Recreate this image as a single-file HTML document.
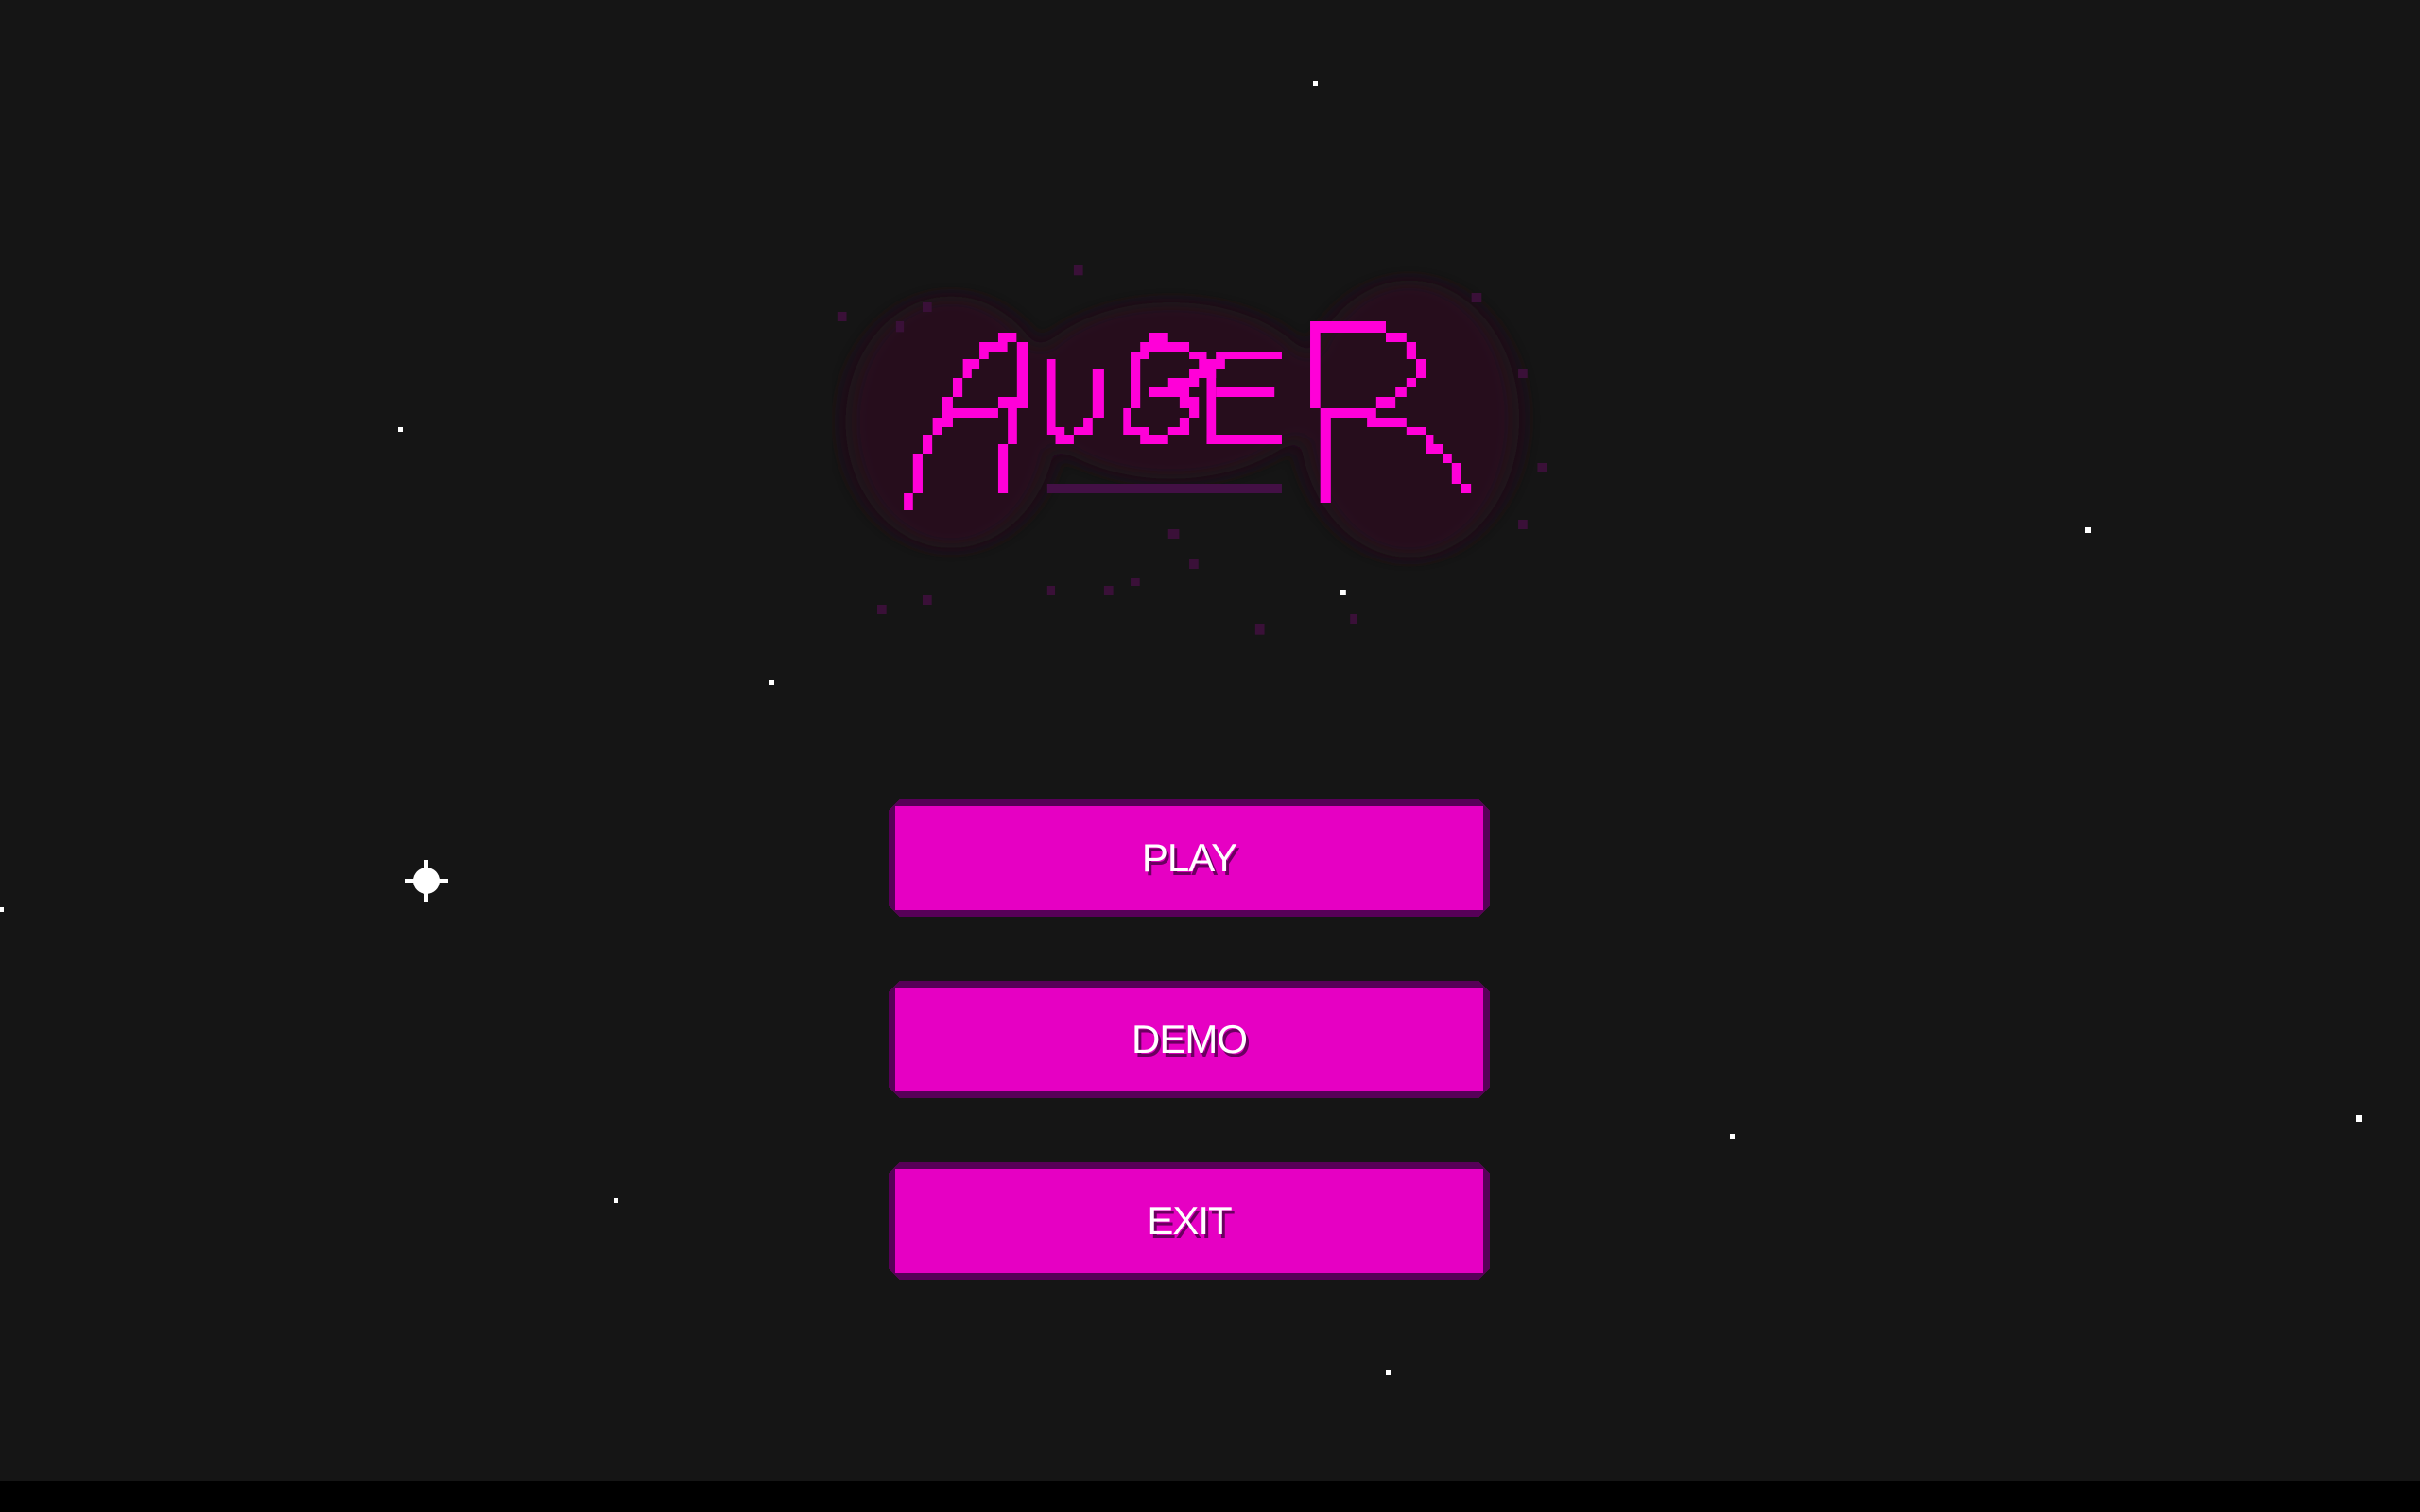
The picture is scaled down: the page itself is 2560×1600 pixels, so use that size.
<!DOCTYPE html>
<html><head><style>
html,body{margin:0;padding:0;background:#151515;width:2560px;height:1600px;overflow:hidden;position:relative;font-family:"Liberation Sans",sans-serif}
.s{position:absolute;background:#fff;width:5px;height:5px}
.btn{position:absolute;left:940px;width:636px;height:124px;background:#e600c3;border:0;box-sizing:border-box;
clip-path:polygon(12px 0,calc(100% - 12px) 0,100% 12px,100% calc(100% - 12px),calc(100% - 12px) 100%,12px 100%,0 calc(100% - 12px),0 12px);}
.btn::before{content:"";position:absolute;inset:0;box-shadow:inset 0 0 0 7px #570058;}
.btn span{position:absolute;left:0;right:0;top:50%;transform:translateY(-50%);text-align:center;color:#fff;font-size:42px;letter-spacing:-1px;text-shadow:3px 4px 0 #6a005f}
.bar{position:absolute;left:0;top:1567px;width:2560px;height:33px;background:#000}
</style></head><body>
<svg style="position:absolute;left:880px;top:280px" width="760" height="400" viewBox="0 0 1568 1200" preserveAspectRatio="none">
<defs><filter id="b"><feGaussianBlur stdDeviation="25"/></filter></defs>
<g fill="#26101f" filter="url(#b)">
<ellipse cx="260" cy="500" rx="230" ry="400"/>
<ellipse cx="740" cy="400" rx="320" ry="280"/>
<ellipse cx="1260" cy="490" rx="240" ry="440"/>
</g>
<g fill="#3a1038">
<rect x="528" y="0" width="20" height="34"/><rect x="198" y="120" width="20" height="30"/><rect x="12" y="150" width="20" height="30"/><rect x="140" y="180" width="17" height="34"/><rect x="1396" y="90" width="22" height="30"/><rect x="1498" y="330" width="20" height="30"/><rect x="1540" y="630" width="20" height="30"/><rect x="1498" y="810" width="20" height="30"/><rect x="734" y="840" width="24" height="30"/><rect x="780" y="936" width="20" height="30"/><rect x="652" y="996" width="20" height="24"/><rect x="470" y="1020" width="17" height="30"/><rect x="594" y="1020" width="20" height="30"/><rect x="198" y="1050" width="20" height="30"/><rect x="99" y="1080" width="20" height="30"/><rect x="1131" y="1110" width="16" height="30"/><rect x="924" y="1140" width="20" height="35"/>
</g>
<rect x="1110" y="1032" width="12" height="18" fill="#fff"/>
<rect x="470" y="696" width="512" height="30" fill="#431045"/>
<g fill="#ff00d8">
<rect x="363" y="216" width="40" height="30"/><rect x="322" y="246" width="61" height="30"/><rect x="322" y="276" width="20" height="24"/><rect x="286" y="300" width="36" height="30"/><rect x="286" y="330" width="19" height="30"/><rect x="264" y="360" width="21" height="60"/><rect x="240" y="420" width="24" height="36"/><rect x="240" y="456" width="123" height="30"/><rect x="220" y="486" width="44" height="30"/><rect x="220" y="516" width="20" height="24"/><rect x="198" y="540" width="21" height="60"/><rect x="177" y="600" width="21" height="126"/><rect x="157" y="726" width="20" height="54"/>
<rect x="404" y="246" width="25" height="174"/><rect x="363" y="420" width="66" height="36"/><rect x="384" y="456" width="20" height="114"/><rect x="363" y="570" width="21" height="156"/>
<rect x="470" y="300" width="18" height="216"/><rect x="470" y="516" width="38" height="24"/><rect x="488" y="540" width="40" height="30"/><rect x="528" y="516" width="41" height="24"/><rect x="549" y="486" width="20" height="30"/><rect x="569" y="330" width="25" height="156"/>
<rect x="693" y="216" width="41" height="30"/><rect x="673" y="246" width="107" height="30"/><rect x="652" y="276" width="41" height="24"/><rect x="652" y="300" width="21" height="156"/><rect x="636" y="456" width="16" height="60"/><rect x="636" y="516" width="57" height="24"/><rect x="673" y="540" width="61" height="30"/><rect x="734" y="516" width="46" height="24"/><rect x="759" y="486" width="21" height="30"/><rect x="780" y="456" width="21" height="30"/><rect x="759" y="420" width="42" height="36"/><rect x="693" y="390" width="87" height="30"/><rect x="734" y="360" width="67" height="30"/><rect x="780" y="330" width="58" height="30"/><rect x="801" y="300" width="57" height="30"/><rect x="780" y="276" width="38" height="24"/>
<rect x="838" y="276" width="144" height="24"/><rect x="818" y="330" width="20" height="240"/><rect x="838" y="390" width="128" height="30"/><rect x="818" y="540" width="164" height="30"/>
<rect x="1044" y="180" width="165" height="36"/><rect x="1044" y="216" width="22" height="240"/><rect x="1209" y="216" width="45" height="30"/><rect x="1254" y="246" width="21" height="54"/><rect x="1275" y="300" width="21" height="60"/><rect x="1254" y="360" width="21" height="30"/><rect x="1230" y="390" width="24" height="30"/><rect x="1188" y="420" width="42" height="36"/><rect x="1066" y="456" width="122" height="30"/><rect x="1066" y="486" width="23" height="270"/><rect x="1168" y="486" width="86" height="30"/><rect x="1254" y="516" width="42" height="24"/><rect x="1296" y="540" width="17" height="30"/><rect x="1296" y="570" width="37" height="30"/><rect x="1333" y="600" width="20" height="30"/><rect x="1353" y="630" width="21" height="66"/><rect x="1374" y="696" width="21" height="30"/>
</g>
</svg>
<div class="s" style="left:1389px;top:86px"></div>
<div class="s" style="left:421px;top:452px"></div>
<div class="s" style="left:2206px;top:558px;width:6px;height:6px"></div>
<div class="s" style="left:813px;top:720px;width:6px"></div>
<div class="s" style="left:0;top:960px;width:4px"></div>
<div class="s" style="left:1830px;top:1200px"></div>
<div class="s" style="left:2492px;top:1180px;width:7px;height:7px"></div>
<div class="s" style="left:649px;top:1268px"></div>
<div class="s" style="left:1466px;top:1450px"></div>
<div style="position:absolute;left:437px;top:918px;width:28px;height:28px;background:#fff;border-radius:50%"></div>
<div style="position:absolute;left:449px;top:910px;width:4px;height:44px;background:#fff"></div>
<div style="position:absolute;left:428px;top:930px;width:46px;height:4px;background:#fff"></div>
<div class="btn" style="top:846px"><span>PLAY</span></div>
<div class="btn" style="top:1038px"><span>DEMO</span></div>
<div class="btn" style="top:1230px"><span>EXIT</span></div>
<div class="bar"></div>
</body></html>
